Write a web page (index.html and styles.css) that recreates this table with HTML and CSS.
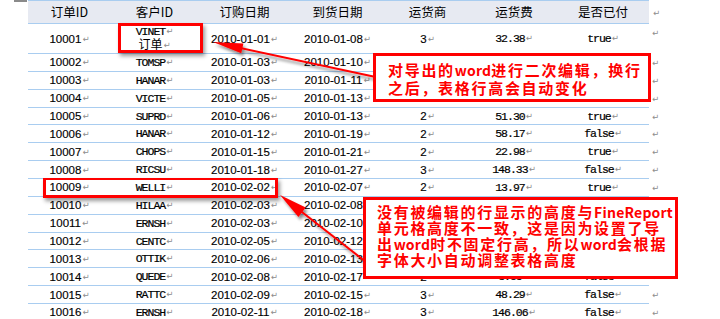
FILE: index.html
```html
<!DOCTYPE html>
<html lang="zh-CN">
<head>
<meta charset="utf-8">
<title>导出word</title>
<link rel="stylesheet" href="styles.css">
</head>
<body>
<div class="doc">
  <table class="grid">
    <colgroup>
      <col class="c1"><col class="c2"><col class="c3"><col class="c4"><col class="c5"><col class="c6"><col class="c7"><col class="c8">
    </colgroup>
    <thead>
      <tr class="hd">
        <th>订单ID</th><th>客户ID</th><th>订购日期</th><th>到货日期</th><th>运货商</th><th>运货费</th><th>是否已付</th><th class="end"></th>
      </tr>
    </thead>
    <tbody>
      <tr class="tall">
        <td>10001</td><td class="mono two">VINET<span class="mk"></span><br><span class="cjk">订单</span></td><td>2010-01-01</td><td>2010-01-08</td><td>3</td><td class="mono">32.38</td><td class="mono">true</td><td class="end top"></td>
      </tr>
      <tr><td>10002</td><td class="mono">TOMSP</td><td>2010-01-03</td><td>2010-01-10</td><td></td><td></td><td></td><td class="end"></td></tr>
      <tr><td>10003</td><td class="mono">HANAR</td><td>2010-01-03</td><td>2010-01-11</td><td></td><td></td><td></td><td class="end"></td></tr>
      <tr><td>10004</td><td class="mono">VICTE</td><td>2010-01-05</td><td>2010-01-13</td><td></td><td></td><td></td><td class="end"></td></tr>
      <tr><td>10005</td><td class="mono">SUPRD</td><td>2010-01-06</td><td>2010-01-13</td><td>2</td><td class="mono">51.30</td><td class="mono">true</td><td class="end"></td></tr>
      <tr><td>10006</td><td class="mono">HANAR</td><td>2010-01-12</td><td>2010-01-19</td><td>2</td><td class="mono">58.17</td><td class="mono">false</td><td class="end"></td></tr>
      <tr><td>10007</td><td class="mono">CHOPS</td><td>2010-01-15</td><td>2010-01-21</td><td>2</td><td class="mono">22.98</td><td class="mono">true</td><td class="end"></td></tr>
      <tr><td>10008</td><td class="mono">RICSU</td><td>2010-01-18</td><td>2010-01-27</td><td>3</td><td class="mono">148.33</td><td class="mono">false</td><td class="end"></td></tr>
      <tr><td>10009</td><td class="mono">WELLI</td><td>2010-02-02</td><td>2010-02-07</td><td>2</td><td class="mono">13.97</td><td class="mono">true</td><td class="end"></td></tr>
      <tr><td>10010</td><td class="mono">HILAA</td><td>2010-02-03</td><td>2010-02-08</td><td></td><td></td><td></td><td class="end"></td></tr>
      <tr><td>10011</td><td class="mono">ERNSH</td><td>2010-02-03</td><td>2010-02-10</td><td></td><td></td><td></td><td class="end"></td></tr>
      <tr><td>10012</td><td class="mono">CENTC</td><td>2010-02-05</td><td>2010-02-12</td><td></td><td></td><td></td><td class="end"></td></tr>
      <tr><td>10013</td><td class="mono">OTTIK</td><td>2010-02-06</td><td>2010-02-13</td><td></td><td></td><td></td><td class="end"></td></tr>
      <tr><td>10014</td><td class="mono">QUEDE</td><td>2010-02-08</td><td>2010-02-17</td><td>2</td><td class="mono">3.05</td><td class="mono">false</td><td class="end"></td></tr>
      <tr><td>10015</td><td class="mono">RATTC</td><td>2010-02-09</td><td>2010-02-15</td><td>3</td><td class="mono">48.29</td><td class="mono">false</td><td class="end"></td></tr>
      <tr><td>10016</td><td class="mono">ERNSH</td><td>2010-02-11</td><td>2010-02-18</td><td>3</td><td class="mono">146.06</td><td class="mono">false</td><td class="end"></td></tr>
    </tbody>
  </table>

  <div class="hl hl-cell"></div>
  <div class="hl hl-row"></div>

  <svg class="arrows" width="720" height="319" viewBox="0 0 720 319" aria-hidden="true">
    <defs>
      <filter id="sh" x="-20%" y="-20%" width="150%" height="160%">
        <feGaussianBlur in="SourceAlpha" stdDeviation="1.8"/>
        <feOffset dx="2" dy="3" result="b"/>
        <feComponentTransfer><feFuncA type="linear" slope="0.45"/></feComponentTransfer>
        <feMerge><feMergeNode/><feMergeNode in="SourceGraphic"/></feMerge>
      </filter>
    </defs>
    <g filter="url(#sh)" fill="#ff0000" stroke="none">
      <line x1="238" y1="47.5" x2="378" y2="77.5" stroke="#ff0000" stroke-width="2"/>
      <polygon points="213,42 241.3,53.3 243.4,43.5"/>
      <line x1="300" y1="210.5" x2="366" y2="262" stroke="#ff0000" stroke-width="2"/>
      <polygon points="280,195 298.4,216.9 305.7,207.5"/>
    </g>
  </svg>

  <div class="note note-1">对导出的<span class="lat">word</span>进行二次编辑，换行<br>之后，表格行高会自动变化</div>
  <div class="note note-2">没有被编辑的行显示的高度与<span class="lat">FineReport</span><br>单元格高度不一致，这是因为设置了导<br>出<span class="lat">word</span>时不固定行高，所以<span class="lat">word</span>会根据<br>字体大小自动调整表格高度</div>
</div>
</body>
</html>
```

FILE: styles.css
```css
* { box-sizing: border-box; }

html, body {
  margin: 0;
  padding: 0;
  background: #ffffff;
}

body {
  width: 720px;
  height: 319px;
  overflow: hidden;
  font-family: "Liberation Sans", Arial, sans-serif;
  color: #000;
}

.doc {
  position: relative;
  width: 720px;
  height: 319px;
  padding-left: 28px;
}

.doc::before {
  content: "";
  position: absolute;
  left: 14px;
  top: 0;
  width: 13px;
  height: 2px;
  background: #8a8a8a;
}

.grid {
  border-collapse: separate;
  border-spacing: 0;
  table-layout: fixed;
  width: 641px;
}

.c1 { width: 83px; }
.c2 { width: 87px; }
.c3 { width: 93px; }
.c4 { width: 93px; }
.c5 { width: 87px; }
.c6 { width: 86px; }
.c7 { width: 92px; }
.c8 { width: 20px; }

.grid th {
  padding: 0;
  background: #e7eaf2;
  border-top: 1px solid #a9cdf0;
  border-bottom: 1px solid #a9cdf0;
  font-family: "Noto Sans CJK SC", sans-serif;
  font-weight: 400;
  font-size: 12.5px;
  line-height: 14px;
  text-align: center;
  color: #000;
}

.grid tr.hd { height: 24px; }
.grid tr { height: 17.86px; }
.grid tr.tall { height: 30px; }

.grid td {
  padding: 0;
  border-bottom: 1px solid #a9cdf0;
  text-align: center;
  vertical-align: middle;
  font-size: 11.5px;
  line-height: 14px;
  white-space: nowrap;
  -webkit-text-stroke: 0.15px #000;
}

.grid td::after,
.mk::after {
  content: "↵";
  font-family: "DejaVu Sans", sans-serif;
  font-size: 8.5px;
  letter-spacing: 0;
  color: #8c8c8c;
  margin-left: 1px;
  vertical-align: 1px;
  -webkit-text-stroke: 0;
}

.grid td:empty:not(.end)::after { content: none; }

.grid td.mono {
  font-family: "Liberation Mono", monospace;
  font-size: 11.5px;
  letter-spacing: -1px;
  -webkit-text-stroke: 0.2px #000;
}

.grid td.two { line-height: 12px; }

.cjk {
  font-family: "Noto Sans CJK SC", sans-serif;
  font-size: 12px;
  letter-spacing: 0;
  -webkit-text-stroke: 0;
}

.grid th.end {
  background: none;
  border: none;
  text-align: left;
  padding-left: 4px;
}

.grid th.end::after {
  content: "↵";
  font-family: "DejaVu Sans", sans-serif;
  font-size: 8.5px;
  color: #8c8c8c;
}

.grid td.end {
  border-bottom: none;
  text-align: left;
  padding-left: 3px;
}

.grid td.end::after { margin-left: 0; }

.grid td.top {
  vertical-align: top;
  padding-top: 2px;
}

/* red highlight frames */
.hl {
  position: absolute;
  border: 3px solid #ff0000;
  box-shadow: 2px 3px 4px rgba(0, 0, 0, 0.4);
}

.hl-cell { left: 118px; top: 23px; width: 85px; height: 30px; }
.hl-row { left: 43px; top: 178px; width: 235px; height: 20px; border-width: 2px 3px 3px 3px; }

.arrows {
  position: absolute;
  left: 0;
  top: 0;
}

/* callouts */
.note {
  position: absolute;
  background: #ffffff;
  border: 3px solid #ff0000;
  color: #ff0000;
  font-family: "Noto Sans CJK SC", sans-serif;
  font-weight: 700;
  font-size: 15px;
  letter-spacing: 1.7px;
  white-space: nowrap;
}

.note .lat {
  font-size: 14px;
  letter-spacing: 0.2px;
}

.note-1 {
  left: 373px;
  top: 53px;
  width: 278px;
  height: 49px;
  padding: 5px 0 0 12px;
  line-height: 17px;
}

.note-2 {
  left: 363px;
  top: 197px;
  width: 315px;
  height: 82px;
  padding: 4px 0 0 11px;
  line-height: 15.4px;
}
```
